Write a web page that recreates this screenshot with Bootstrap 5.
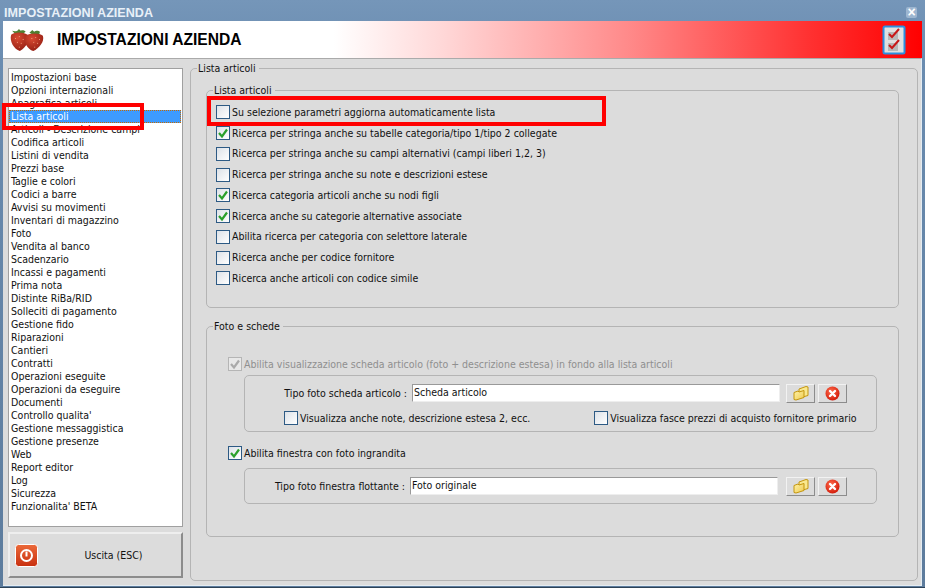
<!doctype html>
<html lang="it"><head><meta charset="utf-8"><title>Impostazioni azienda</title>
<link href="https://cdn.jsdelivr.net/npm/bootstrap@5.3.0/dist/css/bootstrap.min.css" rel="stylesheet">
<style>
html,body{height:100%;overflow:hidden}
body{width:925px;height:588px;background:#5d7c9d;font-family:"DejaVu Sans Condensed","DejaVu Sans",sans-serif;font-stretch:condensed;font-size:10.5px;line-height:13px;color:#111}
.win{position:relative;width:925px;height:588px;padding:0 3px 1px 3px;background:linear-gradient(#7596b9,#6a8cb0 60px,#5d7c9d);border-bottom:1px solid #2c4257}
.ttl{height:20px;color:#e8f0f8;font:bold 12.6px/26px "Liberation Sans",sans-serif;padding-left:1px;overflow:visible}
.xbtn{width:11px;height:11px;background:#9db6d0;border-radius:2px;color:#fff;font:bold 14px/11px "Liberation Sans",sans-serif;text-align:center;margin-right:5px;margin-top:7px}
.hdr{height:37px;margin:1px 0 0;background:linear-gradient(90deg,#fff 0,#fff 36%,#ffd7d7 48%,#ff8a8a 68%,#ff3030 88%,#f00 100%);font:bold 15.6px/36px "Liberation Sans",sans-serif;color:#000}
.hdr .hname{margin-left:11px}
.wbody{height:528px;background:#dcdcdc;padding:9px 3px 0 5px;gap:7px;border-top:1px solid #aaa;border-right:1px solid #e4ecf2;border-bottom:1px solid #e4ecf2}
.lcol{width:175px;gap:5px}
.lbox{height:459px;background:#fff;border:1px solid #a0a0a0;padding:2px 1px 0 0}
.lbox div{height:13px;line-height:13px;white-space:nowrap;padding-left:2px}
.lbox .sel{background:#3d9bff;color:#fff;outline:1px dotted #c66a00;outline-offset:-1px}
.exit{height:46px;width:175px;background:#dcdcdc;border:2px solid;border-color:#eee #8c8c8c #8c8c8c #eee;padding:0 0 0 5px;color:#111;font-size:10.5px}
.exit span{flex:1;text-align:center;padding-left:8px}
fieldset{border:1px solid #b4b4b4;border-radius:5px;min-width:0;margin:0}
legend{float:none;width:auto;font-size:10.5px;line-height:13px;margin:0 0 0 6px;padding:0 3px 0 1px}
.main{width:728px;height:519px;margin-top:-6px;padding:0}
.g1{height:224px;margin:9px 18px 0 15px;padding:5px 0 0 0}
.g1 .chk{margin-left:9px}
.g2{height:217px;margin:12px 18px 0 15px;padding:21px 0 0 0}
.chk{height:20.75px;display:flex;align-items:center;white-space:nowrap}
.box{width:14px;height:14px;flex:none;margin-right:2px;border:1px solid #2d5a84;background:linear-gradient(135deg,#dde2e8,#fff);display:inline-flex;align-items:center;justify-content:center}
.box svg{width:12px;height:12px}
.dis{color:#8f8f8f}.dis .box{border-color:#b5b5b5;background:#e8e8e8}
.sec{margin-left:21px}
.sub{border:1px solid #b4b4b4;border-radius:5px;margin:0 21px 0 37px}
.sub1{height:57px;padding-top:8px}
.sub2{height:36px;padding-top:8px;margin-top:4px}
.lab1,.lab2{width:167px;text-align:right;padding-right:5px;flex:none;white-space:nowrap}
.lab2{width:165px;padding-right:5px}
.inp{background:#fff;border:1px solid #999;border-right-color:#eee;border-bottom-color:#eee;height:18px;line-height:15px;padding-left:1px;width:368px}
.bt{width:29px;height:19px;margin-left:3px;background:#dcdcdc;border:1px solid;border-color:#f2f2f2 #8c8c8c #8c8c8c #f2f2f2;padding:0;display:inline-flex;align-items:center;justify-content:center}
.inp + .bt{margin-left:6px}
.sub2 .inp + .bt{margin-left:8px}
.row2{margin-top:5px;padding-left:39px}
.row2 .chk + .chk{margin-left:64px}
.sec2{margin-top:11px}
.ann{position:absolute;border:4px solid #f00;pointer-events:none}
.ann1{left:2px;top:103px;width:142px;height:27px}
.ann2{left:207px;top:96px;width:399px;height:30px}
.berries{margin-left:2px}
</style></head><body>
<svg width="0" height="0" class="position-absolute"><defs>
<radialGradient id="rg" cx=".4" cy=".35" r=".7"><stop offset="0" stop-color="#ff6a4a"/><stop offset="1" stop-color="#d01808"/></radialGradient>
<linearGradient id="fg" x1="0" y1="0" x2="1" y2="1"><stop offset="0" stop-color="#fff2a8"/><stop offset="1" stop-color="#eecb50"/></linearGradient>
<linearGradient id="og" x1="0" y1="0" x2="0" y2="1"><stop offset="0" stop-color="#ec6a3a"/><stop offset="1" stop-color="#c8300f"/></linearGradient>
<radialGradient id="sb" cx=".4" cy=".3" r=".8"><stop offset="0" stop-color="#d84a32"/><stop offset="1" stop-color="#8e1a10"/></radialGradient>
<symbol id="fold" viewBox="0 0 16 15"><path d="M6 4V3l7-2.500 2 .5v8.500L6 12z" fill="#f9e88e" stroke="#c4960e"/><path d="M1 6.500l4-1.500 1 1 5-1.500v7L3 14l-2-.5z" fill="url(#fg)" stroke="#c4960e"/></symbol>
<symbol id="del" viewBox="0 0 15 15"><circle cx="7.500" cy="7.500" r="7" fill="url(#rg)"/><path d="M5 5l5 5M10 5l-5 5" stroke="#fff" stroke-width="2.400" stroke-linecap="round"/></symbol>
<symbol id="ok" viewBox="0 0 12 12"><path d="M2 6l3 3.500L10 2.500" fill="none" stroke="#2ba02b" stroke-width="2.200"/></symbol>
</defs></svg>
<div class="win">
 <div class="ttl d-flex justify-content-between"><span>IMPOSTAZIONI AZIENDA</span><div class="xbtn">×</div></div>
 <div class="hdr d-flex align-items-center justify-content-between">
  <div class="d-flex align-items-center ps-1">
   <svg class="berries" width="37" height="25" viewBox="0 0 38 26"><path d="M3 4c3 1 6 .5 7-2l2 2c2-1 4-.5 5 1l-4 3-7-1zM21 6l3-3 2 2c2-2 5-1 6 0l-1 3 3 2-6 0z" fill="#4f7f30"/><path d="M2 8c4-3 12-3 17 0 3 5-1 13-8 17-6-2-11-10-9-17z" fill="url(#sb)"/><path d="M17 9c5-3 14-3 18 0 2 6-4 13-10 16-6-2-11-10-8-16z" fill="url(#sb)"/><path d="M6 12h1M10 10h1M14 13h1M8 16h1M12 17h1M10 21h1M23 12h1M27 11h1M31 13h1M25 16h1M29 17h1M26 21h1" stroke="#f0a080" stroke-width="1"/></svg>
   <span class="hname">IMPOSTAZIONI AZIENDA</span>
  </div>
  <svg class="me-3" width="24" height="30" viewBox="0 0 24 30"><rect x="1.500" y="1.500" width="21" height="27" rx="1.500" fill="#e0e0e0" stroke="#2b8fe0" stroke-width="2"/><rect x="6" y="7" width="10" height="8" fill="#b8b8b8"/><rect x="6" y="18" width="10" height="8" fill="#b8b8b8"/><path d="M7 9l3 3 7-8M7 20l3 3 7-8" fill="none" stroke="#c81818" stroke-width="2"/></svg>
 </div>
 <div class="wbody d-flex">
  <div class="lcol d-flex flex-column">
   <div class="lbox">
    <div>Impostazioni base</div><div>Opzioni internazionali</div><div>Anagrafica articoli</div><div class="sel">Lista articoli</div><div>Articoli - Descrizione campi</div><div>Codifica articoli</div><div>Listini di vendita</div><div>Prezzi base</div><div>Taglie e colori</div><div>Codici a barre</div><div>Avvisi su movimenti</div><div>Inventari di magazzino</div><div>Foto</div><div>Vendita al banco</div><div>Scadenzario</div><div>Incassi e pagamenti</div><div>Prima nota</div><div>Distinte RiBa/RID</div><div>Solleciti di pagamento</div><div>Gestione fido</div><div>Riparazioni</div><div>Cantieri</div><div>Contratti</div><div>Operazioni eseguite</div><div>Operazioni da eseguire</div><div>Documenti</div><div>Controllo qualita'</div><div>Gestione messaggistica</div><div>Gestione presenze</div><div>Web</div><div>Report editor</div><div>Log</div><div>Sicurezza</div><div>Funzionalita' BETA</div>
   </div>
   <button class="exit d-flex align-items-center" type="button">
    <svg width="23" height="23" viewBox="0 0 23 23"><rect x=".5" y=".5" width="22" height="22" rx="3" fill="url(#og)" stroke="#fff"/><circle cx="11.500" cy="11.500" r="5.500" fill="none" stroke="#fff" stroke-width="2"/><path d="M11.500 7.500v5" stroke="#fff" stroke-width="2"/></svg>
    <span>Uscita (ESC)</span>
   </button>
  </div>
  <fieldset class="main">
   <legend>Lista articoli</legend>
   <fieldset class="g1">
    <legend>Lista articoli</legend>
    <div class="chk"><span class="box"></span>Su selezione parametri aggiorna automaticamente lista</div>
    <div class="chk"><span class="box"><svg><use href="#ok"/></svg></span>Ricerca per stringa anche su tabelle categoria/tipo 1/tipo 2 collegate</div>
    <div class="chk"><span class="box"></span>Ricerca per stringa anche su campi alternativi (campi liberi 1,2, 3)</div>
    <div class="chk"><span class="box"></span>Ricerca per stringa anche su note e descrizioni estese</div>
    <div class="chk"><span class="box"><svg><use href="#ok"/></svg></span>Ricerca categoria articoli anche su nodi figli</div>
    <div class="chk"><span class="box"><svg><use href="#ok"/></svg></span>Ricerca anche su categorie alternative associate</div>
    <div class="chk"><span class="box"></span>Abilita ricerca per categoria con selettore laterale</div>
    <div class="chk"><span class="box"></span>Ricerca anche per codice fornitore</div>
    <div class="chk"><span class="box"></span>Ricerca anche articoli con codice simile</div>
   </fieldset>
   <fieldset class="g2">
    <legend>Foto e schede</legend>
    <div class="chk dis sec"><span class="box"><svg viewBox="0 0 12 12"><path d="M2 6l3 3.500L10 2.500" fill="none" stroke="#aaa" stroke-width="2.200"/></svg></span>Abilita visualizzazione scheda articolo (foto + descrizione estesa) in fondo alla lista articoli</div>
    <div class="sub sub1">
     <div class="d-flex align-items-center"><span class="lab1">Tipo foto scheda articolo :</span><div class="inp">Scheda articolo</div>
      <button class="bt" type="button"><svg width="16" height="15"><use href="#fold"/></svg></button>
      <button class="bt" type="button"><svg width="15" height="15"><use href="#del"/></svg></button></div>
     <div class="d-flex row2"><div class="chk"><span class="box"></span>Visualizza anche note, descrizione estesa 2, ecc.</div><div class="chk"><span class="box"></span>Visualizza fasce prezzi di acquisto fornitore primario</div></div>
    </div>
    <div class="chk sec sec2"><span class="box"><svg><use href="#ok"/></svg></span>Abilita finestra con foto ingrandita</div>
    <div class="sub sub2"><div class="d-flex align-items-center"><span class="lab2">Tipo foto finestra flottante :</span><div class="inp">Foto originale</div>
      <button class="bt" type="button"><svg width="16" height="15"><use href="#fold"/></svg></button>
      <button class="bt" type="button"><svg width="15" height="15"><use href="#del"/></svg></button></div></div>
   </fieldset>
  </fieldset>
 </div>
 <div class="ann ann1"></div>
 <div class="ann ann2"></div>
</div>
</body></html>
